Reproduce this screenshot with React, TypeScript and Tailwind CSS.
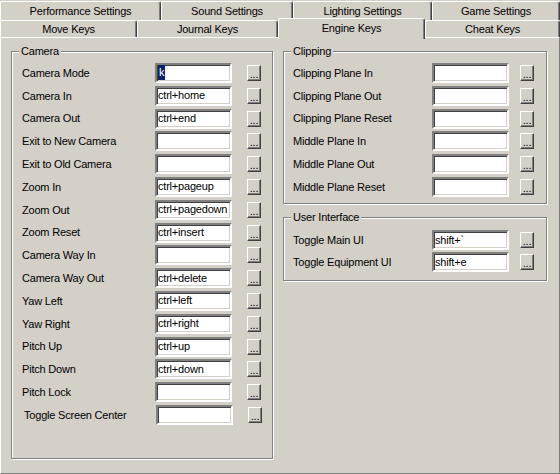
import React from "react";

type Row = [string, string];

const camera: Row[] = [
  ["Camera Mode", "k"],
  ["Camera In", "ctrl+home"],
  ["Camera Out", "ctrl+end"],
  ["Exit to New Camera", ""],
  ["Exit to Old Camera", ""],
  ["Zoom In", "ctrl+pageup"],
  ["Zoom Out", "ctrl+pagedown"],
  ["Zoom Reset", "ctrl+insert"],
  ["Camera Way In", ""],
  ["Camera Way Out", "ctrl+delete"],
  ["Yaw Left", "ctrl+left"],
  ["Yaw Right", "ctrl+right"],
  ["Pitch Up", "ctrl+up"],
  ["Pitch Down", "ctrl+down"],
  ["Pitch Lock", ""],
];

const clipping: Row[] = [
  ["Clipping Plane In", ""],
  ["Clipping Plane Out", ""],
  ["Clipping Plane Reset", ""],
  ["Middle Plane In", ""],
  ["Middle Plane Out", ""],
  ["Middle Plane Reset", ""],
];

const ui: Row[] = [
  ["Toggle Main UI", "shift+`"],
  ["Toggle Equipment UI", "shift+e"],
];

function TextBox({ value, selected }: { value: string; selected?: boolean }) {
  return (
    <div className="w-[77px] h-[20px] bg-white border-2 border-t-[#808080] border-l-[#808080] border-r-white border-b-white shadow-[inset_1px_1px_0_#404040,inset_-1px_-1px_0_#d4d0c8] flex items-center pl-[1px] text-black whitespace-nowrap overflow-hidden">
      {selected ? (
        <span className="inline-block bg-[#0a246a] text-white h-[15px] leading-[15px] px-[1px]">{value}</span>
      ) : (
        <span className="leading-[15px]">{value}</span>
      )}
    </div>
  );
}

function DotsButton() {
  return (
    <div className="w-[14px] h-[16px] bg-[#d4d0c8] border border-t-white border-l-white border-r-[#404040] border-b-[#404040] shadow-[inset_-1px_-1px_0_#808080] flex items-end justify-center text-black text-[11px] leading-[9px] pb-[1px]">
      ...
    </div>
  );
}

function KeyRow({
  label,
  value,
  labelW,
  gapCls,
  selected,
  rowCls,
}: {
  label: string;
  value: string;
  labelW: string;
  gapCls: string;
  selected?: boolean;
  rowCls: string;
}) {
  return (
    <div className={rowCls}>
      <div className={labelW}>{label}</div>
      <TextBox value={value} selected={selected} />
      <div className={gapCls} />
      <DotsButton />
    </div>
  );
}

function GroupBox({
  title,
  cls,
  children,
}: {
  title: string;
  cls: string;
  children: React.ReactNode;
}) {
  return (
    <div className={cls}>
      <div className="absolute -top-[8px] left-[7px] px-[2px] bg-[#d4d0c8] leading-[14px]">{title}</div>
      {children}
    </div>
  );
}

function Tab({ label, cls }: { label: string; cls: string }) {
  return <div className={cls}>{label}</div>;
}

const backTab =
  "h-[19px] bg-[#d4d0c8] border-t border-l border-r border-t-white border-l-white border-r-[#404040] shadow-[inset_-1px_0_0_#808080] rounded-tl-[2px] rounded-tr-[3px] flex items-center justify-center";
const frontTab =
  "h-[17px] bg-[#d4d0c8] border-t border-l border-r border-t-white border-l-white border-r-[#404040] shadow-[inset_-1px_0_0_#808080] rounded-tl-[2px] rounded-tr-[3px] flex items-center justify-center";

export default function App() {
  return (
    <div className="w-[560px] h-[474px] bg-[#d4d0c8] overflow-hidden text-black text-[11px] tracking-[-0.2px] font-['Liberation_Sans',Arial,sans-serif] flex flex-col">
      {/* back tab row */}
      <div className="flex pt-[1px] h-[20px] shrink-0">
        <Tab label="Performance Settings" cls={`w-[161px] ${backTab}`} />
        <Tab label="Sound Settings" cls={`w-[132px] ${backTab}`} />
        <Tab label="Lighting Settings" cls={`w-[139px] ${backTab}`} />
        <Tab label="Game Settings" cls={`w-[128px] ${backTab}`} />
      </div>
      {/* front tab row */}
      <div className="flex items-start h-[17px] shrink-0">
        <Tab label="Move Keys" cls={`w-[137px] ${frontTab}`} />
        <Tab label="Journal Keys" cls={`w-[141px] ${frontTab}`} />
        <div className="relative z-10 w-[147px] h-[21px] -mt-[2px] bg-[#d4d0c8] border-t border-l border-r border-t-white border-l-white border-r-[#404040] shadow-[inset_-1px_0_0_#808080] rounded-tl-[2px] rounded-tr-[3px] flex items-start justify-center pt-[1px]">
          Engine Keys
        </div>
        <Tab label="Cheat Keys" cls={`w-[135px] ${frontTab}`} />
      </div>
      {/* panel */}
      <div className="h-[437px] shrink-0 border border-t-white border-l-white border-r-[#808080] border-b-[#808080] flex items-start pl-[10px] pt-[13px]">
        <GroupBox
          title="Camera"
          cls="relative w-[262px] h-[408px] border border-[#808080] shadow-[inset_1px_1px_0_#fff,1px_1px_0_#fff] pt-[9.6px] pl-[10px]"
        >
          {camera.map(([l, v], i) => (
            <KeyRow
              key={l}
              label={l}
              value={v}
              selected={i === 0}
              labelW="w-[133px] shrink-0 whitespace-nowrap"
              gapCls="w-[15px] shrink-0"
              rowCls="h-[22.8px] flex items-center"
            />
          ))}
          <KeyRow
            label="Toggle Screen Center"
            value=""
            labelW="w-[133px] pl-[1px] shrink-0 whitespace-nowrap"
            gapCls="w-[15px] shrink-0"
            rowCls="h-[22.8px] flex items-center ml-[1px]"
          />
        </GroupBox>
        <div className="ml-[10px] flex flex-col">
          <GroupBox
            title="Clipping"
            cls="relative w-[264px] h-[153px] border border-[#808080] shadow-[inset_1px_1px_0_#fff,1px_1px_0_#fff] pt-[9.6px] pl-[9px]"
          >
            {clipping.map(([l, v]) => (
              <KeyRow
                key={l}
                label={l}
                value={v}
                labelW="w-[139px] shrink-0 whitespace-nowrap"
                gapCls="w-[11px] shrink-0"
                rowCls="h-[22.8px] flex items-center"
              />
            ))}
          </GroupBox>
          <GroupBox
            title="User Interface"
            cls="relative mt-[13px] w-[264px] h-[64px] border border-[#808080] shadow-[inset_1px_1px_0_#fff,1px_1px_0_#fff] pt-[11px] pl-[9px]"
          >
            {ui.map(([l, v]) => (
              <KeyRow
                key={l}
                label={l}
                value={v}
                labelW="w-[139px] shrink-0 whitespace-nowrap"
                gapCls="w-[11px] shrink-0"
                rowCls="h-[22px] flex items-center"
              />
            ))}
          </GroupBox>
        </div>
      </div>
    </div>
  );
}
